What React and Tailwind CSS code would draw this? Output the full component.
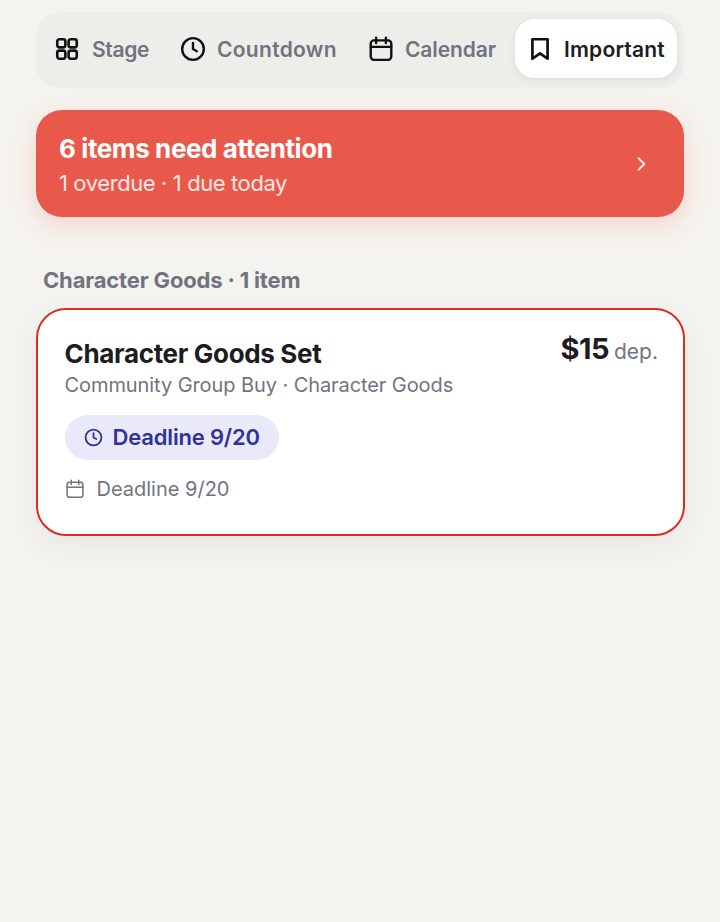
import React from "react";

const F = { fontFamily: '"Inter","Noto Sans",sans-serif' };

function Ico({ className, children, sw = 2 }) {
  return (
    <svg viewBox="0 0 24 24" fill="none" stroke="currentColor" strokeWidth={sw} strokeLinecap="round" strokeLinejoin="round" className={className}>
      {children}
    </svg>
  );
}
const Grid = () => (
  <Ico className="w-[26px] h-[26px] text-[#111]" sw={2.4}>
    <rect x="3" y="3" width="7.5" height="7.5" rx="2" /><rect x="13.5" y="3" width="7.5" height="7.5" rx="2" />
    <rect x="3" y="13.5" width="7.5" height="7.5" rx="2" /><rect x="13.5" y="13.5" width="7.5" height="7.5" rx="2" />
  </Ico>
);
const Clock = ({ className, sw }) => (
  <Ico className={className} sw={sw}><circle cx="12" cy="12" r="10" /><path d="M12 6.5V12l3.5 2" /></Ico>
);
const Cal = ({ className, sw }) => (
  <Ico className={className} sw={sw}>
    <rect x="2.5" y="4" width="19" height="18" rx="3" /><path d="M7.5 1.5v5M16.5 1.5v5M2.5 10h19" />
  </Ico>
);
const Mark = () => (
  <Ico className="w-[26px] h-[26px] text-[#111]" sw={2.5}><path d="M19 21l-7-5-7 5V3h14z" /></Ico>
);

function Tab({ icon, label, active, className, textClass }) {
  return (
    <div className={`flex items-center h-[59px] rounded-[20px] shrink-0 ${active ? "bg-white shadow-[0_2px_8px_rgba(0,0,0,0.07)] text-[#1c1c22]" : "text-[#71747f]"} ${className}`}>
      {icon}
      <span className={`text-[21px] font-semibold leading-none whitespace-nowrap pt-[2px] ${textClass}`}>{label}</span>
    </div>
  );
}

export default function App() {
  return (
    <div style={F} className="min-h-[922px] w-[720px] bg-[#f5f3ef] pt-[12px] px-[36px]">
      <div className="h-[76px] rounded-[24px] bg-[#edeeea] flex items-start pt-[7px] pl-[18px] pr-[7px]">
        <Tab icon={<Grid />} label="Stage" textClass="tracking-[-0.35px]" className="w-[125.5px] gap-[12px]" />
        <Tab icon={<Clock className="w-[26px] h-[26px] text-[#111]" sw={2.2} />} label="Countdown" textClass="tracking-[0.3px]" className="w-[188px] gap-[11.5px]" />
        <Tab icon={<Cal className="w-[26px] h-[26px] text-[#111]" sw={2.2} />} label="Calendar" textClass="tracking-[-0.1px]" className="w-[147.5px] gap-[11.5px]" />
        <Tab icon={<Mark />} label="Important" active textClass="tracking-[0.2px]" className="w-[162px] gap-[11px] pl-[12px]" />
      </div>

      <div className="mt-[22px] h-[107px] rounded-[26px] bg-[#e8594b] shadow-[0_8px_24px_rgba(233,90,77,0.2)] flex items-center justify-between pl-[23px] pr-[33px]">
        <div className="pt-[4px]">
          <div className="text-[26px] font-bold text-white tracking-[-0.4px] leading-[32px]">6 items need attention</div>
          <div className="mt-[3px] text-[22px] text-white/85 tracking-[-0.4px] leading-[30px]">1 overdue · 1 due today</div>
        </div>
        <Ico className="w-[20px] h-[20px] text-white/90" sw={2.4}><path d="M9 5l7 7-7 7" /></Ico>
      </div>

      <div className="mt-[49px] pl-[7px] text-[22px] font-bold text-[#71747f] tracking-[-0.17px] leading-[28px]">Character Goods · 1 item</div>

      <div className="mt-[14px] -mx-[0.5px] h-[227.5px] rounded-[30px] border-[2.5px] border-[#d92d20] bg-white shadow-[0_10px_30px_rgba(0,0,0,0.05)] pl-[27px] pr-[24.5px] pt-[26.5px]">
        <div className="flex justify-between items-start">
          <div>
            <div className="text-[26px] font-bold text-[#1c1c22] tracking-[-0.33px] leading-[34px]">Character Goods Set</div>
            <div className="text-[20px] text-[#71747f] tracking-[-0.08px] leading-[28px]">Community Group Buy · Character Goods</div>
          </div>
          <div className="flex items-baseline gap-[5px] -mt-[6px]">
            <span className="text-[29px] font-bold text-[#1c1c22] tracking-[-0.5px] leading-[36px]">$15</span>
            <span className="text-[21px] text-[#71747f] leading-[28px]">dep.</span>
          </div>
        </div>
        <div className="mt-[16px] inline-flex items-center h-[45px] rounded-full bg-[#e9e9fa] pl-[19px] pr-[19px] gap-[10px] text-[#2f3298]">
          <Clock className="w-[19px] h-[19px]" sw={2.3} />
          <span className="text-[22px] font-semibold tracking-[-0.17px] leading-none">Deadline 9/20</span>
        </div>
        <div className="mt-[16px] flex items-center gap-[12px] text-[#71747f]">
          <Cal className="w-[20px] h-[20px]" sw={1.8} />
          <span className="text-[20px] tracking-[0px] leading-[26px]">Deadline 9/20</span>
        </div>
      </div>
    </div>
  );
}
